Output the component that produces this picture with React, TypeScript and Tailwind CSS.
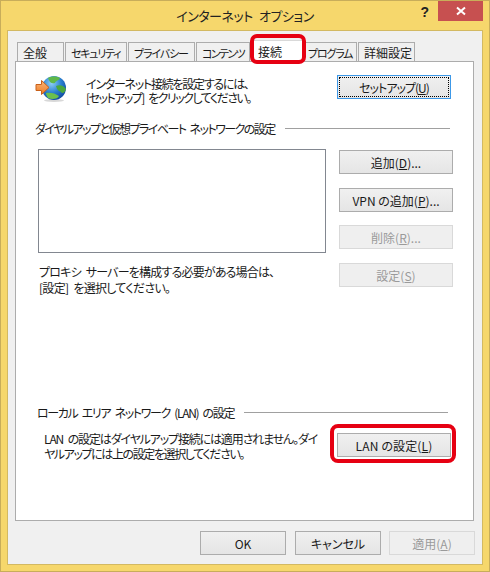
import React from "react";

const font = "[font-family:'Noto_Sans_CJK_JP','Noto_Sans',sans-serif] [font-feature-settings:'palt'] text-[12px] leading-[15px]";

function Btn({ w, h = "h-[24px]", disabled, focus, children }: { w: string; h?: string; disabled?: boolean; focus?: boolean; children: React.ReactNode }) {
  const base = `${w} ${h} shrink-0 flex items-center justify-center whitespace-nowrap`;
  if (disabled) return <div className={`${base} border border-[#d9d9d9] bg-[#efefef] text-[#9a9a9a]`}>{children}</div>;
  if (focus)
    return (
      <div className={`${base} border border-[#3c98e8] bg-gradient-to-b from-[#f0f0f0] to-[#e5e5e5] text-[#1a1a1a] p-px`}>
        <div className="w-full h-full flex items-center justify-center border border-dotted border-black">{children}</div>
      </div>
    );
  return <div className={`${base} border border-[#acacac] bg-gradient-to-b from-[#f0f0f0] to-[#e5e5e5] text-[#1a1a1a]`}>{children}</div>;
}

function Tab({ w, active, children }: { w: string; active?: boolean; children: React.ReactNode }) {
  return active ? (
    <div className={`${w} h-[21px] -mb-px -mt-[1px] z-10 bg-white border border-b-0 border-[#d9d9d9] pl-[6px] pt-[3px] text-[#1a1a1a] shrink-0`}>{children}</div>
  ) : (
    <div className={`${w} h-[19px] mt-[1px] bg-[#f0f0f0] border border-b-0 border-[#acacac] pl-[5px] pt-[2px] text-[#1a1a1a] shrink-0 whitespace-nowrap overflow-hidden`}>{children}</div>
  );
}

function Globe() {
  return (
    <svg width="32" height="28" viewBox="0 0 32 28">
      <defs>
        <radialGradient id="g" cx="0.4" cy="0.3" r="0.8">
          <stop offset="0" stopColor="#8fd0f5" />
          <stop offset="0.5" stopColor="#2a7fd0" />
          <stop offset="1" stopColor="#0d3f95" />
        </radialGradient>
        <linearGradient id="a" x1="0" y1="0" x2="0" y2="1">
          <stop offset="0" stopColor="#fbb77a" />
          <stop offset="1" stopColor="#ee7a22" />
        </linearGradient>
      </defs>
      <ellipse cx="19" cy="25.5" rx="10" ry="1.5" fill="#d8d8d8" />
      <circle cx="19" cy="13" r="12" fill="url(#g)" />
      <path d="M13 3 C16 1 22 1 25 3 C24 6 21 5 20 8 C17 9 15 8 13 3Z" fill="#5fb84a" />
      <path d="M21 11 C25 9 29 11 31 14 C30 18 27 19 26 17 C24 16 22 15 21 11Z" fill="#4ba83c" />
      <path d="M11 18 C15 17 20 18 24 21 C23 24 17 25 13 23 C12 21 11 20 11 18Z" fill="#6cc04e" />
      <path d="M1 9.5 H6.5 V5.5 L14 12.5 L6.5 19.5 V15.5 H1 Z" fill="url(#a)" stroke="#c9601a" strokeWidth="1" />
    </svg>
  );
}

export default function App() {
  return (
    <div className={`${font} w-[490px] h-[572px] bg-[#f6d76c] border border-[#c8ad5a] flex flex-col px-[6px] pb-[6px] overflow-hidden`}>
      <div className="h-[29px] shrink-0 relative flex items-center justify-center">
        <span className="text-[13px] tracking-[-0.5px] [word-spacing:4px] text-[#222]">インターネット オプション</span>
        <div className="absolute right-[54px] top-[1px] text-[14px] leading-[20px] font-bold text-[#222] [font-family:'Liberation_Sans',sans-serif]">?</div>
        <div className="absolute right-0 top-0 w-[45px] h-[20px] bg-[#c75050] flex items-center justify-center">
          <svg width="10" height="10" viewBox="0 0 10 10"><path d="M1 1.5 L9 8.5 M9 1.5 L1 8.5" stroke="#fff" strokeWidth="2" /></svg>
        </div>
      </div>

      <div className="flex-1 bg-[#f0f0f0] border border-[#d3b962] flex flex-col px-[7px] pt-[10px] pb-[8px]">
        <div className="flex pl-[2px] gap-px h-[20px] relative">
          <Tab w="w-[47px]">全般</Tab>
          <Tab w="w-[62px]"><span className="text-[11px] tracking-[-1.3px]">セキュリティ</span></Tab>
          <Tab w="w-[67px]"><span className="text-[11px] tracking-[-1.1px]">プライバシー</span></Tab>
          <Tab w="w-[54px]"><span className="text-[11px] tracking-[-1.6px]">コンテンツ</span></Tab>
          <Tab w="w-[52px]" active>接続</Tab>
          <Tab w="w-[53px]"><span className="-ml-[2px] text-[11px] tracking-[-1.2px]">プログラム</span></Tab>
          <Tab w="w-[57px]">詳細設定</Tab>
          <div className="absolute left-[235px] top-[-7px] w-[56px] h-[30px] rounded-[7px] border-[4px] border-[#e60012] z-20" />
        </div>

        <div className="w-[459px] h-[460px] bg-white border border-[#acacac] flex flex-col pl-[19px] pr-[20px]">
          <div className="flex items-start pt-[13px]">
            <Globe />
            <div className="ml-[19px] mt-[2px] w-[251px] leading-[14px] text-[#1a1a1a] whitespace-nowrap">
              <div className="tracking-[-1.25px]">インターネット接続を設定するには、</div>
              <div className="tracking-[-1.5px] [word-spacing:3px]">[セットアップ] をクリックしてください。</div>
            </div>
            <Btn w="w-[114px]" focus><span className="tracking-[-1px]">セットアップ(<u>U</u>)</span></Btn>
          </div>

          <div className="mt-[16px] flex items-center">
            <span className="whitespace-nowrap text-[#1a1a1a] tracking-[-1.55px] [word-spacing:3px]">ダイヤルアップと仮想プライベート ネットワークの設定</span>
            <div className="w-[165px] h-px bg-[#a0a0a0] ml-[10px]" />
          </div>

          <div className="flex pl-[3px] mt-[13px] justify-between">
            <div className="flex flex-col">
              <div className="w-[288px] h-[104px] border border-[#828790] bg-white" />
              <div className="mt-[11px] ml-px leading-[16px] text-[#1a1a1a] whitespace-nowrap">
                <div className="tracking-[-0.8px] [word-spacing:3px]">プロキシ サーバーを構成する必要がある場合は、</div>
                <div className="tracking-[-0.7px] [word-spacing:3px]">[設定] を選択してください。</div>
              </div>
            </div>
            <div className="flex flex-col gap-[14px] mt-px">
              <Btn w="w-[114px]"><span>追加(<u>D</u>)...</span></Btn>
              <Btn w="w-[114px]"><span>VPN の追加(<u>P</u>)...</span></Btn>
              <div className="-mt-px"><Btn w="w-[114px]" disabled><span>削除(<u>R</u>)...</span></Btn></div>
              <Btn w="w-[114px]" disabled><span>設定(<u>S</u>)</span></Btn>
            </div>
          </div>

          <div className="mt-[109px] flex items-center pl-[2px]">
            <span className="whitespace-nowrap text-[#1a1a1a] tracking-[-1.35px] [word-spacing:3px]">ローカル エリア ネットワーク (LAN) の設定</span>
            <div className="w-[204px] h-px bg-[#a0a0a0] ml-[10px]" />
          </div>

          <div className="flex mt-[13px] pl-[9px] relative">
            <div className="w-[293px] leading-[15px] -mt-[2px] text-[#1a1a1a] whitespace-nowrap">
              <div className="tracking-[-1.15px] [word-spacing:3px]">LAN の設定はダイヤルアップ接続には適用されません。ダイ</div>
              <div className="tracking-[-1.4px]">ヤルアップには上の設定を選択してください。</div>
            </div>
            <Btn w="w-[114px]"><span className="tracking-[0.15px]">LAN の設定(<u>L</u>)</span></Btn>
            <div className="absolute left-[295px] top-[-9px] w-[126px] h-[39px] rounded-[8px] border-[4px] border-[#e60012]" />
          </div>
        </div>

        <div className="flex justify-end mt-[10px]">
          <Btn w="w-[86px]"><span>OK</span></Btn>
          <div className="ml-[9px]"><Btn w="w-[86px]"><span>キャンセル</span></Btn></div>
          <div className="ml-[8px]"><Btn w="w-[86px]" disabled><span>適用(<u>A</u>)</span></Btn></div>
        </div>
      </div>
    </div>
  );
}
